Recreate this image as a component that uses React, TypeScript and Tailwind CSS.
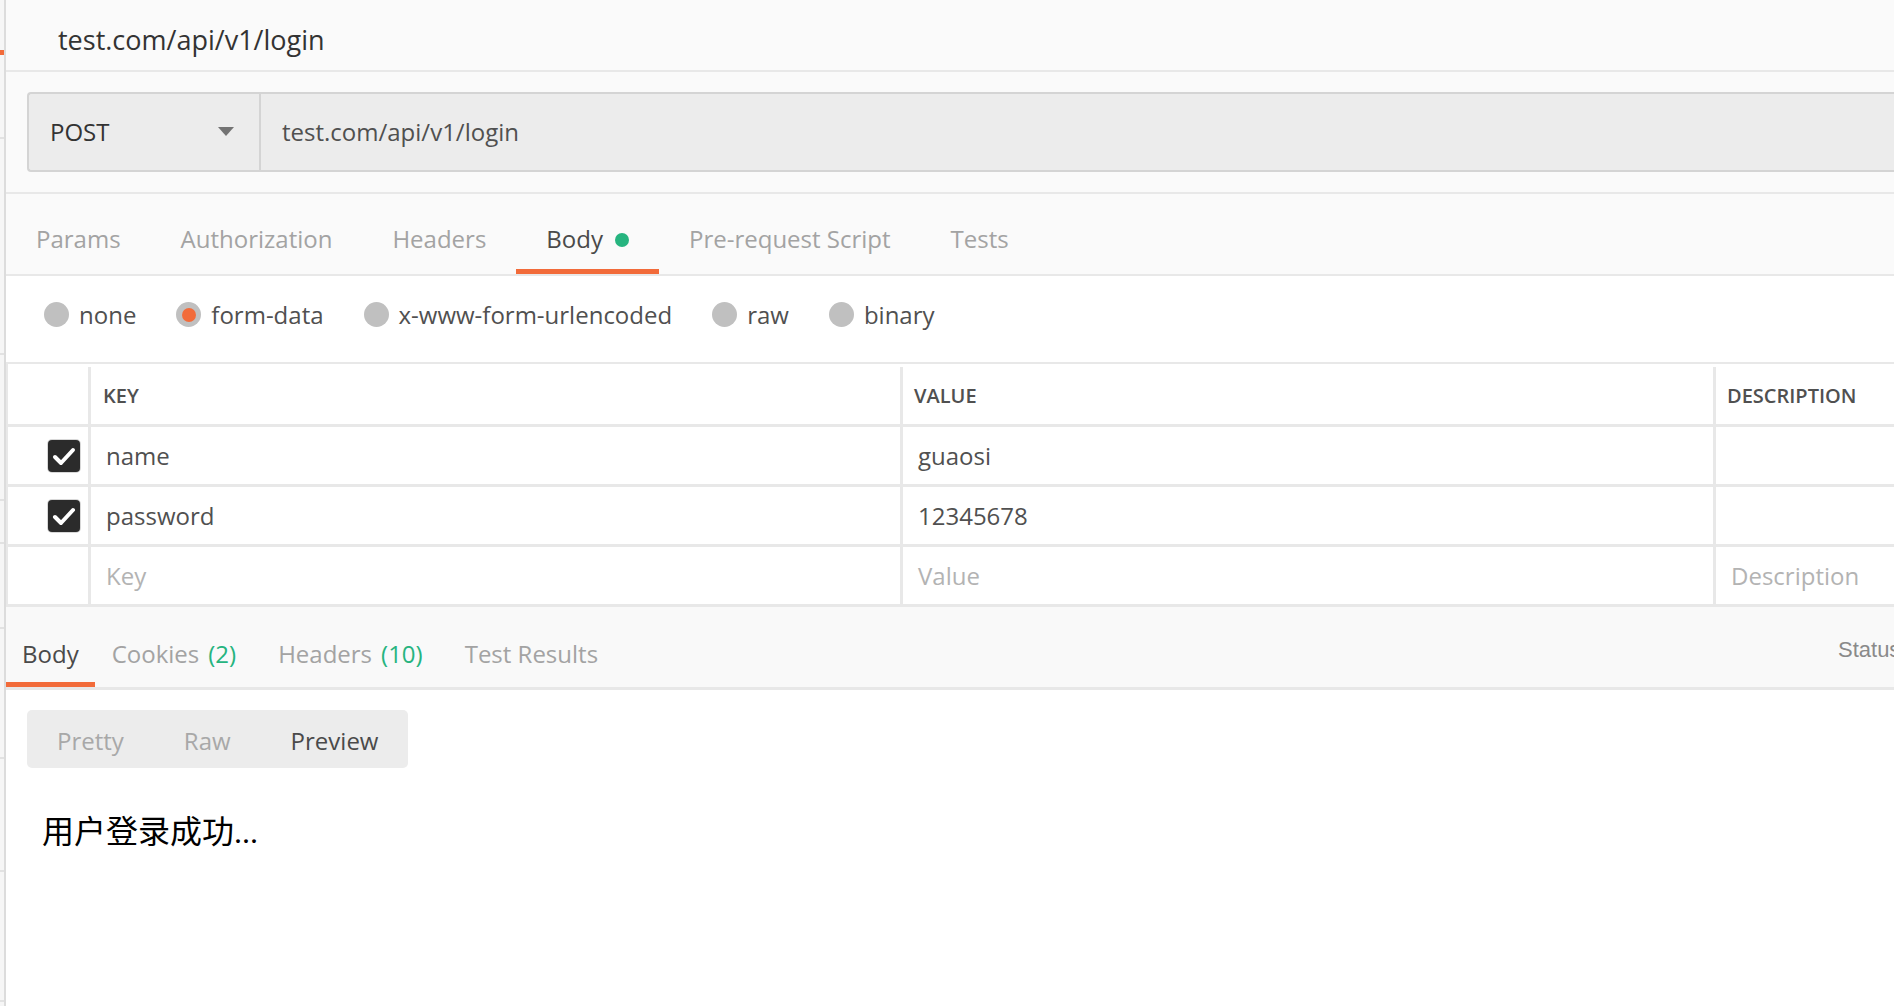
import React from 'react';

const reqTabs = ['Params', 'Authorization', 'Headers', 'Body', 'Pre-request Script', 'Tests'];
const bodyModes = ['none', 'form-data', 'x-www-form-urlencoded', 'raw', 'binary'];

const rows = [
  { key: 'name', value: 'guaosi', checked: true },
  { key: 'password', value: '12345678', checked: true },
];

const sideLines = [137, 353, 499, 542, 627, 757, 870, 1000];

function Check() {
  return (
    <div className="flex h-[32px] w-[32px] items-center justify-center rounded-[4px] bg-[#2b2b2b] ring-1 ring-[#d8d8d8]">
      <svg width="32" height="32" viewBox="0 0 32 32" fill="none">
        <polyline points="7,17 13,23 25,10" stroke="#fff" strokeWidth="4" strokeLinecap="round" strokeLinejoin="round" />
      </svg>
    </div>
  );
}

function Radio({ label, active }: { label: string; active?: boolean }) {
  return (
    <div className="flex h-[25px] items-center gap-[10px]">
      <span className="flex h-[25px] w-[25px] items-center justify-center rounded-full bg-[#c0c0c0]">
        {active && <span className="h-[14px] w-[14px] rounded-full bg-[#f26b3a]" />}
      </span>
      <span className="text-[24px] leading-[33px] text-[#505050]">{label}</span>
    </div>
  );
}

export default function App() {
  return (
    <div className="flex h-[1006px] w-full overflow-hidden bg-white font-['Open_Sans',sans-serif]">
      {/* sidebar sliver */}
      <div className="relative w-[4px] shrink-0 bg-[#f6f6f6]">
        <div className="absolute left-0 top-[50px] h-[5px] w-[4px] bg-[#f26b3a]" />
        {sideLines.map((y) => (
          <div key={y} className="absolute left-0 h-[2px] w-[4px] bg-[#e2e2e2]" style={{ top: y }} />
        ))}
      </div>

      <div className="flex min-w-0 flex-1 flex-col border-l-2 border-[#dcdcdc]">
        {/* title */}
        <div className="flex h-[70px] shrink-0 items-center bg-[#fafafa] pl-[52px] pt-[10px] text-[27px] text-[#333]">
          test.com/api/v1/login
        </div>

        {/* url bar */}
        <div className="border-t-2 border-[#e8e8e8] bg-[#fafafa] py-[20px] pl-[21px]">
          <div className="flex h-[80px] rounded-l-[4px] border-2 border-r-0 border-[#d4d4d4] bg-[#ececec]">
            <div className="flex w-[232px] shrink-0 items-center justify-between border-r-2 border-[#d4d4d4] pl-[21px] pr-[25px]">
              <span className="text-[24px] text-[#333]">POST</span>
              <svg width="16" height="10" viewBox="0 0 16 10">
                <polygon points="0,0 16,0 8,9" fill="#737373" />
              </svg>
            </div>
            <div className="flex items-center pl-[21px] text-[24px] text-[#505050]">test.com/api/v1/login</div>
          </div>
        </div>

        {/* request tabs */}
        <div className="flex h-[84px] shrink-0 border-y-2 border-[#e8e8e8] bg-[#fafafa]">
          {reqTabs.map((t) => {
            const active = t === 'Body';
            return (
              <div key={t} className="relative flex items-center px-[30px] pt-[9px]">
                <span className={`text-[24px] leading-[33px] ${active ? 'text-[#4a4a4a]' : 'text-[#a3a3a3]'}`}>{t}</span>
                {active && <span className="ml-[12px] mt-[2px] h-[14px] w-[14px] rounded-full bg-[#26b47f]" />}
                {active && <div className="absolute bottom-0 left-0 right-0 h-[5px] bg-[#f26b3a]" />}
              </div>
            );
          })}
        </div>

        {/* body modes */}
        <div className="flex h-[86px] shrink-0 items-start gap-[40px] bg-white pl-[38px] pt-[26px]">
          {bodyModes.map((m) => (
            <Radio key={m} label={m} active={m === 'form-data'} />
          ))}
        </div>

        {/* form table */}
        <div className="shrink-0 border-l-2 border-t-2 border-[#e8e8e8] bg-white">
          <div className="flex h-[63px] border-b-[3px] border-[#e8e8e8] pt-[3px] text-[20px] font-semibold text-[#505050]">
            <div className="w-[83px] shrink-0 border-r-[3px] border-[#e8e8e8]" />
            <div className="flex w-[812px] shrink-0 items-center border-r-[3px] border-[#e8e8e8] pl-[12px]">KEY</div>
            <div className="flex w-[813px] shrink-0 items-center border-r-[3px] border-[#e8e8e8] pl-[11px]">VALUE</div>
            <div className="flex flex-1 items-center whitespace-nowrap pl-[11px]">DESCRIPTION</div>
          </div>
          {rows.map((r) => (
            <div key={r.key} className="flex h-[60px] border-b-[3px] border-[#e8e8e8] text-[24px] text-[#505050]">
              <div className="flex w-[83px] shrink-0 items-center justify-end border-r-[3px] border-[#e8e8e8] pr-[8px]">
                {r.checked && <Check />}
              </div>
              <div className="flex w-[812px] shrink-0 items-center border-r-[3px] border-[#e8e8e8] pl-[15px]">{r.key}</div>
              <div className="flex w-[813px] shrink-0 items-center border-r-[3px] border-[#e8e8e8] pl-[15px]">{r.value}</div>
              <div className="flex-1" />
            </div>
          ))}
          <div className="flex h-[60px] border-b-[3px] border-[#e8e8e8] text-[24px] text-[#b3b3b3]">
            <div className="w-[83px] shrink-0 border-r-[3px] border-[#e8e8e8]" />
            <div className="flex w-[812px] shrink-0 items-center border-r-[3px] border-[#e8e8e8] pl-[15px]">Key</div>
            <div className="flex w-[813px] shrink-0 items-center border-r-[3px] border-[#e8e8e8] pl-[15px]">Value</div>
            <div className="flex flex-1 items-center whitespace-nowrap pl-[15px]">Description</div>
          </div>
        </div>

        {/* response tabs */}
        <div className="flex h-[83px] shrink-0 border-b-[3px] border-[#e8e8e8] bg-[#f9f9f9] text-[24px] leading-[33px]">
          <div className="relative flex items-center px-[16px] pt-[13px] text-[#4a4a4a]">
            Body
            <div className="absolute bottom-0 left-0 right-0 h-[5px] bg-[#f26b3a]" />
          </div>
          <div className="flex items-center pl-[17px] pr-[21px] pt-[13px] text-[#a3a3a3]">
            Cookies<span className="ml-[9px] text-[#26b47f]">(2)</span>
          </div>
          <div className="flex items-center px-[21px] pt-[13px] text-[#a3a3a3]">
            Headers<span className="ml-[9px] text-[#26b47f]">(10)</span>
          </div>
          <div className="flex items-center px-[21px] pt-[13px] text-[#a3a3a3]">Test Results</div>
          <div className="flex-1" />
          <div className="flex w-[56px] shrink-0 items-center overflow-visible whitespace-nowrap pt-[4px] font-['Liberation_Sans',sans-serif] text-[22px] text-[#8a8a8a]">
            Status
          </div>
        </div>

        {/* response body */}
        <div className="flex-1 bg-white pl-[21px] pt-[20px]">
          <div className="flex h-[58px] w-fit items-center rounded-[5px] bg-[#ececec] pt-[3px] text-[24px]">
            <span className="px-[30px] text-[#a8a8a8]">Pretty</span>
            <span className="px-[30px] text-[#a8a8a8]">Raw</span>
            <span className="px-[30px] text-[#4a4a4a]">Preview</span>
          </div>
          <div className="mt-[44px] pl-[15px] font-['Liberation_Serif','Noto_Sans_CJK_SC',serif] text-[32px] leading-[40px] text-black">
            用户登录成功...
          </div>
        </div>
      </div>
    </div>
  );
}
